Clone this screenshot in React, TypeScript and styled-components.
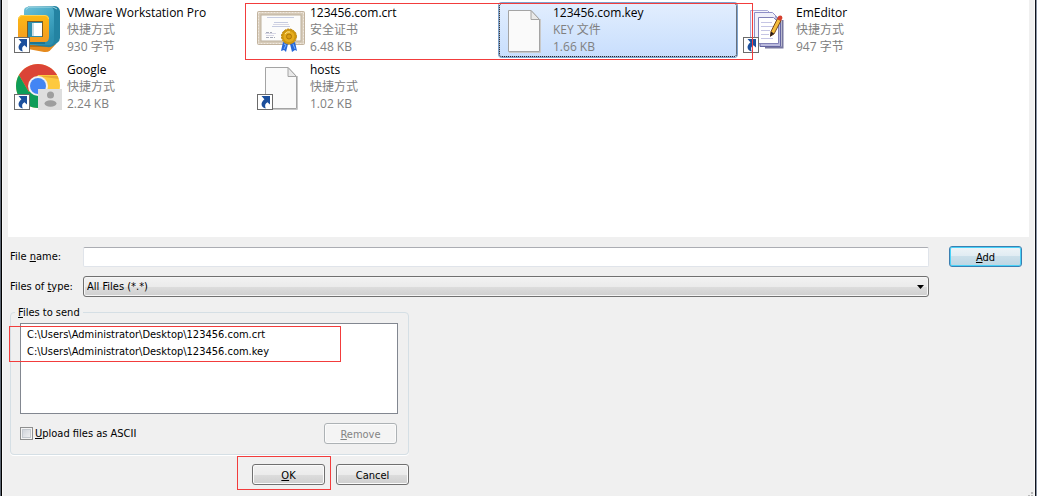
import React from 'react';
import styled, { createGlobalStyle, css } from 'styled-components';

const GlobalStyle = createGlobalStyle`
  * { box-sizing: border-box; }
  body {
    margin: 0;
    background: #f0f0f0;
    color: #000;
    font-family: 'DejaVu Sans Condensed', 'Noto Sans CJK SC', sans-serif;
    font-size: 11px;
    line-height: 17px;
  }
`;

const Dialog = styled.main`
  min-height: 100vh;
  position: relative;
  background: #f0f0f0;
  border-left: 1px solid #5d6673;
  border-right: 1px solid #8b95a5;
  box-shadow: inset 1px 0 #000, inset -1px 0 #10131c, inset 2px 0 #fafafa, inset -2px 0 #fafafa;
  overflow: hidden;
`;

const FilePane = styled.section`
  position: relative;
  min-height: 237px;
  margin: 0 7px;
  padding: 3px 0 0 5px;
  background: #fff;
`;

const FileGrid = styled.div`
  display: grid;
  grid-template-columns: repeat(4, 238px);
  gap: 3px 5px;
`;

const FileTile = styled.article<{ $selected?: boolean }>`
  display: flex;
  gap: 5px;
  height: 54px;
  padding: 2px 1px;
  border-radius: 3px;
  font-family: 'Open Sans', 'Noto Sans CJK SC', sans-serif;
  font-size: 12px;
  line-height: 17px;
  ${(p) =>
    p.$selected &&
    css`
      background: linear-gradient(#e2eefe, #c8defd);
      box-shadow: 0 0 0 1px #7da2ce;
      outline: 1px dotted #000;
      outline-offset: -1px;
    `}
`;

const FileInfo = styled.div`
  margin-top: -1px;
  color: #808080;
  white-space: nowrap;
`;

const FileName = styled.div`
  color: #000;
`;

const Icon = styled.svg`
  display: block;
  flex: none;
  width: 48px;
  height: 48px;
`;

const Highlight = styled.div<{ $top: number; $left: number; $width: number; $height: number }>`
  position: absolute;
  top: ${(p) => p.$top}px;
  left: ${(p) => p.$left}px;
  width: ${(p) => p.$width}px;
  height: ${(p) => p.$height}px;
  border: 1px solid #f23c3c;
  pointer-events: none;
`;

const Fields = styled.div`
  display: grid;
  grid-template-columns: 73px 1fr 73px;
  row-gap: 9px;
  align-items: center;
  padding: 9px 14px 0 9px;
`;

const FieldLabel = styled.label`
  padding-bottom: 1px;
`;

const TextBox = styled.input`
  display: block;
  width: 100%;
  height: 20px;
  padding: 0 3px;
  border: 1px solid #e0e4ea;
  border-top-color: #abadb3;
  border-radius: 2px;
  background: #fff;
  font: inherit;
`;

const SelectWrap = styled.div`
  position: relative;
`;

const Select = styled.select`
  display: block;
  appearance: none;
  width: 100%;
  height: 21px;
  padding: 0 20px 0 3px;
  border: 1px solid #707070;
  border-radius: 3px;
  background: linear-gradient(#f2f2f2 0%, #ebebeb 50%, #dddddd 50%, #cfcfcf 100%);
  box-shadow: inset 0 0 0 1px #f6f6f6;
  color: #000;
  font: inherit;
`;

const Arrow = styled.svg`
  position: absolute;
  top: 9px;
  right: 5px;
  width: 7px;
  height: 4px;
  pointer-events: none;
`;

const Button = styled.button<{ $primary?: boolean }>`
  width: 73px;
  height: 21px;
  padding: 1px 0 0;
  border: 1px solid #707070;
  border-radius: 3px;
  background: linear-gradient(#f2f2f2 0%, #ebebeb 50%, #dddddd 50%, #cfcfcf 100%);
  box-shadow: inset 0 0 0 1px #fbfbfb;
  color: #000;
  font: inherit;
  ${(p) =>
    p.$primary &&
    css`
      border-color: #3c7fb1;
      background: linear-gradient(#eef4f8 0%, #dfebf2 50%, #cbdfea 50%, #bdd6e3 100%);
      box-shadow: inset 0 0 0 1px #48d2f8;
    `}
  &:disabled {
    border-color: #adb2b5;
    background: #f4f4f4;
    color: #838383;
  }
`;

const AddCell = styled.div`
  display: flex;
  justify-content: flex-end;
`;

const FieldCell = styled.div`
  padding-right: 20px;
`;

const Lower = styled.div`
  position: relative;
  width: 399px;
  margin: 7px 0 0 9px;
`;

const Group = styled.fieldset`
  min-width: 0;
  margin: 0;
  padding: 2px 10px 10px 9px;
  border: 1px solid #d5dfe5;
  border-radius: 4px;
  box-shadow: 0 1px #fff;
`;

const Legend = styled.legend`
  margin-left: -5px;
  padding: 0 3px;
`;

const FileList = styled.ul`
  height: 91px;
  margin: 0;
  padding: 2px 6px;
  border: 1px solid #828790;
  background: #fff;
  list-style: none;
`;

const GroupFooter = styled.div`
  display: flex;
  justify-content: space-between;
  align-items: center;
  margin-top: 9px;
  padding-right: 1px;
`;

const CheckLabel = styled.label`
  display: flex;
  align-items: center;
  gap: 2px;
`;

const CheckBox = styled.input`
  appearance: none;
  width: 13px;
  height: 13px;
  margin: 0;
  border: 1px solid #8e8f8f;
  background: linear-gradient(135deg, #c9ced6, #f6f6f6);
  box-shadow: inset 0 0 0 1px #f4f4f4, inset 0 0 0 2px #c4c9cf;
`;

const Actions = styled.div`
  display: flex;
  justify-content: flex-end;
  gap: 11px;
  margin-top: 9px;
`;

const Grip = styled.svg`
  position: absolute;
  right: 3px;
  bottom: 0;
  width: 5px;
  height: 4px;
`;

const Shortcut = () => (
  <g>
    <rect x="0.5" y="32.5" width="15" height="15" fill="#fff" stroke="#6b6b6b" />
    <path d="M4.500 34H13V42.500L10.400 40.200C8 41.800 7.500 43.500 8.800 46.500C4.200 45.500 2.800 41 7.400 37.200Z" fill="#1c4f9c" />
  </g>
);

const PageShape = () => (
  <g>
    <path d="M9 47.500H40.500V14" fill="none" stroke="#c8c8c8" />
    <path d="M8.500 5.500H31L39.500 14.500V46.500H8.500Z" fill="#fafafa" stroke="#a4a4a4" />
    <path d="M31 5.500V14.500H39.500Z" fill="#e9e9e9" stroke="#a4a4a4" strokeLinejoin="round" />
  </g>
);

const VmwareIcon = () => (
  <Icon viewBox="0 0 48 48" aria-hidden="true">
    <defs>
      <linearGradient id="vmTeal" x2="0.600" y2="1">
        <stop stopColor="#6fc0d6" />
        <stop offset="0.500" stopColor="#46a9c6" />
        <stop offset="1" stopColor="#2c8fae" />
      </linearGradient>
      <linearGradient id="vmOrange" x2="0" y2="1">
        <stop stopColor="#fdb913" />
        <stop offset="1" stopColor="#f29a22" />
      </linearGradient>
    </defs>
    <path d="M14 39H42L36 45.500Q34 47.500 30 47L14 44Z" fill="#e58a1e" />
    <path d="M16 39H38L35 42H16Z" fill="#b96d14" />
    <path d="M14 1.500 40 1Q45 1 46 6V33Q46 36 43 38L39 41Q37 42.500 33 42L12 39V5Z" fill="#2383a2" />
    <path d="M14 2H35Q40 2 40 7V34Q40 40 35 40H14Q10 40 10 36V6Q10 2 14 2Z" fill="url(#vmTeal)" />
    <path d="M12 4.500 15 2H39L43 4" fill="none" stroke="#a5dbe7" strokeWidth="1" />
    <path d="M4 13 7 10H30Q35 10 35 14V32Q35 37 31 37H8Q4 37 4 32Z" fill="url(#vmOrange)" />
    <path d="M4.500 14Q5 10.500 8 10.500H31Q34.500 10.500 34.500 14" fill="none" stroke="#ffd456" />
    <path d="M13 16H29V32H13Z" fill="#7a5a24" />
    <path d="M14 17H28V32H14Z" fill="#2d8faf" />
    <path d="M18 18H28V31H18Z" fill="#fff" />
    <path d="M18 18H20V31H18Z" fill="#c9dde3" />
    <path d="M10 37H31V39H12Z" fill="#1d7593" />
    <Shortcut />
  </Icon>
);

const ChromeIcon = () => (
  <Icon viewBox="0 0 48 48" aria-hidden="true">
    <circle cx="24" cy="24" r="22" fill="#fdc93f" />
    <path d="M4.950 13A22 22 0 0 1 43.050 13H24L14.500 29.500Z" fill="#db4437" />
    <path d="M4.950 13A22 22 0 0 0 24 46L33.500 29.500H14.500Z" fill="#0f9d58" />
    <path d="M24 14H43.500a22 22 0 0 1 1 3z" fill="#e9a931" />
    <circle cx="24" cy="24" r="10" fill="#f1f1f1" />
    <circle cx="24" cy="24" r="8" fill="#4285f4" />
    <rect x="24" y="27" width="24" height="21" fill="#dedede" />
    <circle cx="36.500" cy="33" r="3.500" fill="#9e9e9e" />
    <ellipse cx="36.500" cy="41.500" rx="6" ry="3.200" fill="#9e9e9e" />
    <Shortcut />
  </Icon>
);

const CertificateIcon = () => (
  <Icon viewBox="0 0 48 48" aria-hidden="true">
    <rect x="0.500" y="6.500" width="47" height="33" rx="1" fill="#d6cab8" stroke="#c2b39e" />
    <rect x="1.500" y="7.500" width="45" height="31" fill="none" stroke="#f0e9df" strokeDasharray="2 1" />
    <rect x="4" y="10" width="40" height="26" fill="#fcfcfb" stroke="#bdb19e" />
    <path d="M10 12.500h27M17 17.500h14M15 21.500h18" stroke="#c5cbe0" />
    <path d="M16 19.500h16M8 28.500h11M9 30.500h8" stroke="#d7d7e5" />
    <path d="M9 27.500h6M9 32.500h9" stroke="#a7acba" strokeDasharray="3 1" />
    <path d="m26 37 5 2-2 8-2-2-3 1zM33 39l5-2 2 9-2-1-3 2z" fill="#2768d8" />
    <path d="m27 39 2 1-2 4M36 39l2 5" fill="none" stroke="#80b2f7" />
    <circle cx="32" cy="31.500" r="7.500" fill="#cf970e" stroke="#bb8207" strokeDasharray="2 1" />
    <circle cx="32" cy="31.500" r="5.500" fill="#e5ac1e" />
    <circle cx="32" cy="31.500" r="2.500" fill="#d69b12" stroke="#ad7608" />
    <path d="M28 29q2-3 5-2" fill="none" stroke="#fbe28c" />
  </Icon>
);

const EmEditorIcon = () => (
  <Icon viewBox="0 0 48 48" aria-hidden="true">
    <path d="M22 42.500H39.500V15" fill="none" stroke="#77779f" strokeWidth="2" />
    <path d="M7.500 5.500h17l3 3v26h-20z" fill="#f6f6fc" stroke="#a9a9d6" />
    <path d="M11.500 7.500h18l3 3v28h-21z" fill="#f0f0fa" stroke="#8f8fc6" />
    <path d="M32.500 11 37.500 15.500V41.500H17V38" fill="#b9b9dd" stroke="#6464a0" />
    <path d="M15.500 12.500h15l5 5v21h-20z" fill="#fff" stroke="#8181b7" />
    <path d="M18 17.500h11M18 21.500h12M18 25.500h9M18 29.500h8M18 33.500h12" stroke="#c5c5e4" />
    <path d="m34.500 13.500 3.500 2-7 13.500-3.500 2 .5-4.500z" fill="#f4bd3c" stroke="#7a4a1c" />
    <path d="m28 26.500 3 2-4 3.500z" fill="#2a1d1d" />
    <path d="m34 14 4 2 1.500-3q-.5-3.500-4-2z" fill="#d5402f" />
    <Shortcut />
  </Icon>
);

const PageIcon = ({ shortcut }: { shortcut?: boolean }) => (
  <Icon viewBox="0 0 48 48" aria-hidden="true">
    <PageShape />
    {shortcut && <Shortcut />}
  </Icon>
);

const files = [
  { name: 'VMware Workstation Pro', kind: '快捷方式', size: '930 字节', icon: <VmwareIcon /> },
  { name: '123456.com.crt', kind: '安全证书', size: '6.48 KB', icon: <CertificateIcon /> },
  { name: '123456.com.key', kind: 'KEY 文件', size: '1.66 KB', icon: <PageIcon />, selected: true },
  { name: 'EmEditor', kind: '快捷方式', size: '947 字节', icon: <EmEditorIcon /> },
  { name: 'Google', kind: '快捷方式', size: '2.24 KB', icon: <ChromeIcon /> },
  { name: 'hosts', kind: '快捷方式', size: '1.02 KB', icon: <PageIcon shortcut /> },
];

const queued = [
  'C:\\Users\\Administrator\\Desktop\\123456.com.crt',
  'C:\\Users\\Administrator\\Desktop\\123456.com.key',
];

export default function App() {
  return (
    <>
      <GlobalStyle />
      <Dialog>
        <FilePane>
          <FileGrid>
            {files.map((f) => (
              <FileTile key={f.name} $selected={f.selected}>
                {f.icon}
                <FileInfo>
                  <FileName>{f.name}</FileName>
                  <div>{f.kind}</div>
                  <div>{f.size}</div>
                </FileInfo>
              </FileTile>
            ))}
          </FileGrid>
          <Highlight $top={3} $left={237} $width={508} $height={57} />
        </FilePane>
        <Fields>
          <FieldLabel htmlFor="file-name">
            File <u>n</u>ame:
          </FieldLabel>
          <FieldCell>
            <TextBox id="file-name" type="text" />
          </FieldCell>
          <AddCell>
            <Button type="button" $primary>
              <u>A</u>dd
            </Button>
          </AddCell>
          <FieldLabel htmlFor="file-type">
            Files of <u>t</u>ype:
          </FieldLabel>
          <FieldCell>
            <SelectWrap>
              <Select id="file-type">
                <option>All Files (*.*)</option>
              </Select>
              <Arrow viewBox="0 0 7 4" aria-hidden="true">
                <path d="M0 0h7L3.500 4z" />
              </Arrow>
            </SelectWrap>
          </FieldCell>
        </Fields>
        <Lower>
          <Group>
            <Legend>
              <u>F</u>iles to send
            </Legend>
            <FileList>
              {queued.map((path) => (
                <li key={path}>{path}</li>
              ))}
            </FileList>
            <GroupFooter>
              <CheckLabel>
                <CheckBox type="checkbox" />
                <span>
                  <u>U</u>pload files as ASCII
                </span>
              </CheckLabel>
              <Button type="button" disabled>
                <u>R</u>emove
              </Button>
            </GroupFooter>
          </Group>
          <Actions>
            <Button type="button">
              <u>O</u>K
            </Button>
            <Button type="button">Cancel</Button>
          </Actions>
          <Highlight $top={22} $left={-1} $width={332} $height={36} />
          <Highlight $top={152} $left={227} $width={94} $height={34} />
        </Lower>
        <Grip viewBox="0 0 5 4" aria-hidden="true">
          <path d="M3 0h2v2H3zM0 3h2v1H0zM3 3h2v1H3z" fill="#b8b8b8" />
        </Grip>
      </Dialog>
    </>
  );
}
